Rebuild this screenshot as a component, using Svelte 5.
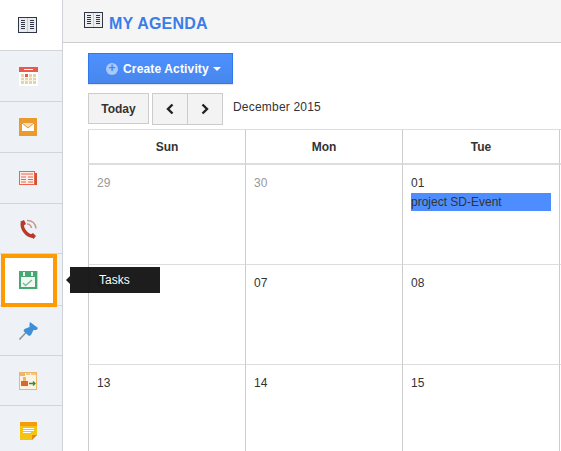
<script>
  const sideItems = ["agenda", "calendar", "mail", "news", "phone", "tasks", "pin", "contact", "note"];
  const days = ["Sun", "Mon", "Tue", ""];
  const weeks = [
    [{ n: "29", muted: true }, { n: "30", muted: true }, { n: "01", event: "project SD-Event" }, { n: "" }],
    [{ n: "06" }, { n: "07" }, { n: "08" }, { n: "" }],
    [{ n: "13" }, { n: "14" }, { n: "15" }, { n: "" }]
  ];
</script>

<div class="page">
  <aside class="sidebar">
    {#each sideItems as item}
      <div class="side-item side-{item}">
        {#if item === "agenda"}
          <svg width="19" height="16" viewBox="0 0 19 16">
            <rect x="0.5" y="0.5" width="18" height="15" fill="#e9ebee" stroke="#2f3747" />
            <rect x="9" y="1" width="1" height="14" fill="#c9ccd2" />
            <path d="M3 3.500h4M3 5.500h4M3 7.500h4M3 9.500h4M3 11.500h4M12 3.500h4M12 5.500h4M12 7.500h4M12 9.500h4M12 11.500h4" stroke="#2f3747" />
          </svg>
        {:else if item === "calendar"}
          <svg width="19" height="19" viewBox="0 0 19 19">
            <rect width="19" height="19" fill="#fff" />
            <rect width="19" height="5" fill="#ea5a4c" />
            <rect x="5" y="2" width="9" height="1" fill="#fff" />
            <path d="M2 7h3v10H2zM6 7h3v10H6zM10 7h3v10h-3zM14 7h3v10h-3z" fill="#e2d5a8" />
            <path d="M2 10.500h15M2 13.500h15" stroke="#f6f1e0" />
            <rect x="6" y="7" width="3" height="3" fill="#ea5a4c" />
          </svg>
        {:else if item === "mail"}
          <svg width="18" height="18" viewBox="0 0 18 18">
            <rect width="18" height="18" fill="#e99b30" />
            <path d="M3 5h12v8H3z" fill="#fff" />
            <path d="M3 5l6 5 6-5" fill="#f6dcae" stroke="#e99b30" />
          </svg>
        {:else if item === "news"}
          <svg width="18" height="14" viewBox="0 0 18 14">
            <rect x="15" y="2" width="3" height="12" fill="#c9543a" />
            <rect x="0.500" y="0.500" width="15" height="13" fill="#fbeee8" stroke="#e8654a" />
            <path d="M2 3h12M2 6h5M2 8.500h5M2 11h5M9 6h5M9 8.500h5M9 11h5" stroke="#e8654a" stroke-width="1.2" />
          </svg>
        {:else if item === "phone"}
          <svg width="19" height="20" viewBox="0 0 19 20">
            <path d="M3.500 3C2 9 7 17 14.500 17.500" fill="none" stroke="#b93a28" stroke-width="3.400" />
            <path d="M1.500 2.500L5 1l2 4-3 2zM11 16l3-2 3 3-2.500 3z" fill="#b93a28" />
            <path d="M8 5c2.500 0 4 1.500 4.500 4M8 1.500c5 0 8.500 3 9 8" fill="none" stroke="#c9998f" stroke-width="1.500" />
          </svg>
        {:else if item === "tasks"}
          <svg width="19" height="18" viewBox="0 0 19 18">
            <rect width="18" height="18" fill="#46a873" />
            <rect x="18" width="1" height="18" fill="#bcdcca" />
            <rect x="2" y="6" width="14" height="10" fill="#f4f8f5" />
            <rect x="4" y="1" width="2" height="4" fill="#e6f2ea" />
            <rect x="12" y="1" width="2" height="4" fill="#e6f2ea" />
            <path d="M4 12l2.500 2.500L13 9" fill="none" stroke="#6fc293" stroke-width="1.400" />
          </svg>
        {:else if item === "pin"}
          <svg width="19" height="18" viewBox="0 0 19 18">
            <path d="M0.500 17.500L7 10.500" stroke="#8f979f" stroke-width="1.600" />
            <path d="M11 0l8 6-1.500 2-3 0-2.500 5-2 1-5.500-5 1-2 5-2 0-3z" fill="#3d8fd6" />
          </svg>
        {:else if item === "contact"}
          <svg width="18" height="18" viewBox="0 0 18 18">
            <rect x="0.500" y="0.500" width="17" height="17" fill="#fdf3e2" stroke="#f0b566" />
            <rect width="6" height="4" fill="#f0b566" />
            <rect x="7" y="1" width="4" height="2" fill="#f0c88e" />
            <rect x="12" y="1" width="5" height="2" fill="#f0c88e" />
            <rect x="4" y="5" width="3" height="4" fill="#f0b566" />
            <rect x="2" y="9" width="7" height="5" fill="#d9682a" />
            <path d="M10 11.500h6M14 9.500l2 2-2 2" fill="none" stroke="#2f8a4a" stroke-width="1.300" />
          </svg>
        {:else}
          <svg width="17" height="18" viewBox="0 0 17 18">
            <path d="M0 0h17v13l-5 5H0z" fill="#f4c414" />
            <rect width="17" height="4" fill="#f39c12" />
            <path d="M3 6.500h11M3 8.500h11M3 10.500h8" stroke="#fff" />
            <path d="M12 18v-5h5z" fill="#e08a10" />
          </svg>
        {/if}
      </div>
    {/each}
  </aside>

  <div class="tooltip">Tasks</div>

  <main class="content">
    <header class="topbar">
      <svg width="19" height="16" viewBox="0 0 19 16">
        <rect x="0.500" y="0.500" width="18" height="15" fill="#eceef0" stroke="#2f3747" />
        <rect x="9" y="1" width="1" height="14" fill="#c9ccd2" />
        <path d="M3 3.500h4M3 5.500h4M3 7.500h4M3 9.500h4M3 11.500h4M12 3.500h4M12 5.500h4M12 7.500h4M12 9.500h4M12 11.500h4" stroke="#2f3747" />
      </svg>
      <h1>MY AGENDA</h1>
    </header>

    <div class="body">
      <button class="create">
        <span class="plus">+</span>
        Create Activity
        <span class="caret"></span>
      </button>

      <div class="toolbar">
        <button class="btn today">Today</button>
        <div class="nav">
          <button class="btn arrow" aria-label="Previous">
            <svg width="8" height="12" viewBox="0 0 8 12"><path d="M6.500 1.500L2 6l4.500 4.500" fill="none" stroke="#222" stroke-width="2.400" /></svg>
          </button>
          <button class="btn arrow second" aria-label="Next">
            <svg width="8" height="12" viewBox="0 0 8 12"><path d="M1.500 1.500L6 6l-4.500 4.500" fill="none" stroke="#222" stroke-width="2.400" /></svg>
          </button>
        </div>
        <span class="month">December 2015</span>
      </div>

      <div class="grid">
        <div class="head">
          {#each days as day}
            <div class="head-cell">{day}</div>
          {/each}
        </div>
        {#each weeks as week}
          <div class="week">
            {#each week as cell}
              <div class="cell">
                <span class="num" class:muted={cell.muted}>{cell.n}</span>
                {#if cell.event}
                  <div class="event">{cell.event}</div>
                {/if}
              </div>
            {/each}
          </div>
        {/each}
      </div>
    </div>
  </main>
</div>

<style>
  :global(body) {
    margin: 0;
    font-family: "Liberation Sans", Arial, sans-serif;
    background: #fff;
  }

  .page {
    position: relative;
    display: flex;
    width: 561px;
    height: 451px;
    overflow: hidden;
  }

  .sidebar {
    width: 62px;
    flex-shrink: 0;
    background: #eef1f6;
    border-right: 1px solid #cfd2d6;
  }

  .side-item {
    position: relative;
    height: 50px;
    border-bottom: 1px solid #d4d5d8;
    display: flex;
    align-items: center;
    justify-content: center;
    padding-right: 6px;
  }

  .side-agenda {
    background: #fff;
    padding-right: 7px;
  }

  .side-phone,
  .side-pin,
  .side-contact,
  .side-note {
    height: 49px;
  }

  .side-tasks {
    height: 51px;
  }

  /* orange highlight sits over the row and its divider */
  .side-tasks::before {
    content: "";
    position: absolute;
    left: 1px;
    top: 0;
    width: 48px;
    height: 45px;
    border: 4px solid #ff9b00;
    background: #fff;
  }

  .side-tasks svg {
    position: relative;
  }

  .tooltip {
    position: absolute;
    left: 70px;
    top: 267px;
    width: 61px;
    height: 26px;
    padding-left: 29px;
    background: #161616;
    color: #fff;
    font-size: 12px;
    line-height: 26px;
    opacity: 0.97;
    z-index: 2;
  }

  .tooltip::before {
    content: "";
    position: absolute;
    left: -4px;
    top: 9px;
    border-style: solid;
    border-width: 4px 4px 4px 0;
    border-color: transparent #161616 transparent transparent;
  }

  .content {
    flex: 1;
    min-width: 0;
  }

  .topbar {
    height: 43px;
    background: #f5f5f5;
    border-bottom: 1px solid #ccc;
    display: flex;
    align-items: flex-start;
    gap: 6px;
    padding-left: 21px;
    padding-top: 12px;
    box-sizing: border-box;
  }

  .topbar h1 {
    margin: 3px 0 0;
    font-size: 16px;
    line-height: 18px;
    font-weight: bold;
    letter-spacing: 0.2px;
    color: #3b7de8;
  }

  .body {
    padding: 10px 0 0 25px;
  }

  .create {
    display: flex;
    align-items: center;
    width: 145px;
    height: 31px;
    padding: 0 0 0 17px;
    background: linear-gradient(#4d90fe, #4787ed);
    border: 1px solid #3079ed;
    box-shadow: 0 1px 1px rgba(0, 0, 0, 0.1);
    color: #fff;
    font: bold 12px "Liberation Sans", Arial, sans-serif;
    letter-spacing: 0.15px;
    box-sizing: border-box;
  }

  .plus {
    width: 12px;
    height: 12px;
    margin-right: 5px;
    border-radius: 50%;
    background: #a9c8fb;
    color: #4787ed;
    font-size: 12px;
    line-height: 11px;
    text-align: center;
  }

  .caret {
    margin-left: 4px;
    border-style: solid;
    border-width: 4px 4px 0;
    border-color: #fff transparent transparent;
  }

  .toolbar {
    display: flex;
    align-items: flex-start;
    margin-top: 9px;
    height: 36px;
  }

  .btn {
    background: #f3f3f3;
    border: 1px solid #ccc;
    color: #333;
    box-sizing: border-box;
    padding: 0;
    display: flex;
    align-items: center;
    justify-content: center;
    font: bold 12px "Liberation Sans", Arial, sans-serif;
  }

  .today {
    width: 61px;
    height: 31px;
  }

  .nav {
    display: flex;
    margin-left: 3px;
  }

  .arrow {
    width: 36px;
    height: 32px;
  }

  .second {
    margin-left: -1px;
  }

  .month {
    margin-left: 10px;
    margin-top: 7px;
    font-size: 12px;
    line-height: 14px;
    letter-spacing: 0.2px;
    color: #333;
  }

  .grid {
    width: 480px;
  }

  .head,
  .week {
    display: grid;
    grid-template-columns: repeat(4, 157px);
  }

  .head {
    border-top: 1px solid #ddd;
    border-bottom: 2px solid #ddd;
    height: 36px;
    box-sizing: border-box;
  }

  .head-cell {
    border-left: 1px solid #ccc;
    text-align: center;
    font-size: 12px;
    font-weight: bold;
    line-height: 34px;
    color: #333;
  }

  .week {
    height: 100px;
  }

  .cell {
    border-left: 1px solid #ccc;
    border-bottom: 1px solid #ddd;
    padding: 11px 8px 0;
    font-size: 12px;
    line-height: 14px;
    color: #333;
  }

  .num {
    display: block;
    height: 14px;
  }

  .num.muted {
    color: #999;
  }

  .event {
    margin-top: 3px;
    background: #4d8dff;
    height: 18px;
    line-height: 18px;
    color: #333;
  }
</style>
